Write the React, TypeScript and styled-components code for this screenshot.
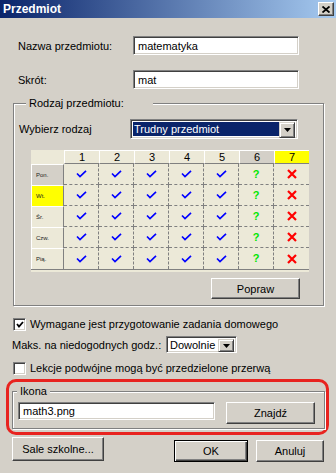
import styled, { createGlobalStyle } from "styled-components";

const GlobalStyle = createGlobalStyle`
  html, body {
    margin: 0;
    padding: 0;
    background: #d4d0c8;
  }
  * {
    box-sizing: border-box;
  }
`;

type Tone = "plain" | "grey" | "yellow";

const toneColor: Record<Tone, string> = {
  plain: "#ece9d8",
  grey: "#d4d0c8",
  yellow: "#ffff00",
};

const days: { label: string; tone: Tone }[] = [
  { label: "Pon.", tone: "grey" },
  { label: "Wt.", tone: "yellow" },
  { label: "Śr.", tone: "plain" },
  { label: "Czw.", tone: "plain" },
  { label: "Pią.", tone: "plain" },
];

const hours: { label: string; tone: Tone; mark: "yes" | "maybe" | "no" }[] = [
  { label: "1", tone: "plain", mark: "yes" },
  { label: "2", tone: "plain", mark: "yes" },
  { label: "3", tone: "plain", mark: "yes" },
  { label: "4", tone: "plain", mark: "yes" },
  { label: "5", tone: "plain", mark: "yes" },
  { label: "6", tone: "grey", mark: "maybe" },
  { label: "7", tone: "yellow", mark: "no" },
];

const CheckMark = () => (
  <svg width="11" height="8" viewBox="0 0 11 8">
    <polyline points="1,3.5 4,6.5 10,0.8" fill="none" stroke="#0000ff" strokeWidth="1.7" />
  </svg>
);

const CrossMark = () => (
  <svg width="10" height="10" viewBox="0 0 10 10">
    <path d="M1 1 L9 9 M9 1 L1 9" stroke="#ff0000" strokeWidth="2.2" />
  </svg>
);

const DropArrow = () => (
  <svg width="7" height="4" viewBox="0 0 7 4">
    <polygon points="0,0 7,0 3.5,4" fill="#000" />
  </svg>
);

const App = () => {
  return (
    <>
      <GlobalStyle />
      <Window>
        <TitleBar>
          <Title>Przedmiot</Title>
          <CloseButton>
            <svg width="8" height="7" viewBox="0 0 8 7">
              <path d="M0.5 0.5 L7.5 6.5 M7.5 0.5 L0.5 6.5" stroke="#000" strokeWidth="1.8" />
            </svg>
          </CloseButton>
        </TitleBar>

        <FieldRow $top={18} $left={18}>
          <Label $width={115}>Nazwa przedmiotu:</Label>
          <TextBox $width={166} $height={19}>matematyka</TextBox>
        </FieldRow>
        <FieldRow $top={15} $left={18}>
          <Label $width={115}>Skrót:</Label>
          <TextBox $width={166} $height={19}>mat</TextBox>
        </FieldRow>

        <GroupBox $top={7} $left={13} $width={311} $pad="9px 5px 6px 5px">
          <Legend $shift={7} $width={127}>Rodzaj przedmiotu:</Legend>
          <FieldRow $top={0} $left={0}>
            <Label $width={111}>Wybierz rodzaj</Label>
            <Combo $width={168} $height={20}>
              <ComboText $selected>Trudny przedmiot</ComboText>
              <ComboButton $height={16}>
                <DropArrow />
              </ComboButton>
            </Combo>
          </FieldRow>

          <Grid>
            <Corner />
            {hours.map((h) => (
              <HeadCell key={h.label} $tone={h.tone}>
                {h.label}
              </HeadCell>
            ))}
            {days.map((d, row) => (
              <>
                <DayCell key={d.label} $tone={d.tone}>
                  {d.label}
                </DayCell>
                {hours.map((h, col) => (
                  <MarkCell
                    key={d.label + h.label}
                    $lastCol={col === hours.length - 1}
                    $lastRow={row === days.length - 1}
                  >
                    {h.mark === "yes" && <CheckMark />}
                    {h.mark === "maybe" && <Maybe>?</Maybe>}
                    {h.mark === "no" && <CrossMark />}
                  </MarkCell>
                ))}
              </>
            ))}
          </Grid>

          <Button $width={89} $height={21} $top={8} $align="flex-end" $right={18}>
            Popraw
          </Button>
        </GroupBox>

        <CheckRow $top={11}>
          <CheckBox>
            <svg width="8" height="7" viewBox="0 0 8 7">
              <polyline points="1,3 3,5.5 7,1" fill="none" stroke="#000" strokeWidth="1.8" />
            </svg>
          </CheckBox>
          Wymagane jest przygotowanie zadania domowego
        </CheckRow>

        <FieldRow $top={5} $left={12}>
          <Label $width={154}>Maks. na niedogodnych godz.:</Label>
          <Combo $width={71} $height={17}>
            <ComboText>Dowolnie</ComboText>
            <ComboButton $height={13}>
              <DropArrow />
            </ComboButton>
          </Combo>
        </FieldRow>

        <CheckRow $top={8}>
          <CheckBox />
          Lekcje podwójne mogą być przedzielone przerwą
        </CheckRow>

        <Highlight>
          <GroupBox $top={0} $left={0} $width={313} $pad="2px 5px 4px 5px">
            <Legend $shift={-1}>Ikona</Legend>
            <IconRow>
              <TextBox $width={197} $height={18}>math3.png</TextBox>
              <Button $width={89} $height={22}>
                Znajdź
              </Button>
            </IconRow>
          </GroupBox>
        </Highlight>

        <ButtonBar>
          <Button $width={92} $height={24}>
            Sale szkolne...
          </Button>
          <Button $width={74} $height={22} $top={3} $left={70} $default>
            OK
          </Button>
          <Button $width={68} $height={22} $top={3} $left={8}>
            Anuluj
          </Button>
        </ButtonBar>
      </Window>
    </>
  );
};

const Window = styled.div`
  width: 336px;
  height: 473px;
  background: #d4d0c8;
  display: flex;
  flex-direction: column;
  overflow: hidden;
  font-family: "Liberation Sans", Arial, sans-serif;
  font-size: 11px;
  color: #000;
`;

const TitleBar = styled.div`
  height: 18px;
  display: flex;
  align-items: center;
  justify-content: space-between;
  padding: 0 2px 0 3px;
  background: linear-gradient(to right, #0a246a, #a6caf0);
`;

const Title = styled.span`
  color: #fff;
  font-weight: bold;
  font-size: 12px;
`;

const CloseButton = styled.div`
  width: 16px;
  height: 14px;
  display: flex;
  align-items: center;
  justify-content: center;
  background: #d4d0c8;
  border: 1px solid;
  border-color: #fff #404040 #404040 #fff;
  box-shadow: inset -1px -1px 0 #808080;
`;

const FieldRow = styled.div<{ $top: number; $left: number }>`
  display: flex;
  align-items: center;
  margin-top: ${(p) => p.$top}px;
  padding-left: ${(p) => p.$left}px;
`;

const Label = styled.span<{ $width: number }>`
  width: ${(p) => p.$width}px;
  flex-shrink: 0;
  white-space: nowrap;
`;

const sunken = `
  border: 1px solid;
  border-color: #808080 #fff #fff #808080;
  box-shadow: inset 1px 1px 0 #404040, inset -1px -1px 0 #d4d0c8;
`;

const TextBox = styled.div<{ $width: number; $height: number }>`
  ${sunken}
  width: ${(p) => p.$width}px;
  height: ${(p) => p.$height}px;
  background: #fff;
  display: flex;
  align-items: center;
  padding-left: 4px;
`;

const GroupBox = styled.fieldset<{ $top: number; $left: number; $width: number; $pad: string }>`
  margin: ${(p) => p.$top}px 0 0 ${(p) => p.$left}px;
  width: ${(p) => p.$width}px;
  padding: ${(p) => p.$pad};
  border: 1px solid #808080;
  box-shadow: 1px 1px 0 #fff, inset 1px 1px 0 #fff;
  display: flex;
  flex-direction: column;
  min-inline-size: 0;
`;

const Legend = styled.legend<{ $shift: number; $width?: number }>`
  margin-left: ${(p) => p.$shift}px;
  padding: 0 3px;
  line-height: 14px;
  font-size: 11px;
  background: #d4d0c8;
  ${(p) => (p.$width ? `width: ${p.$width}px;` : "")}
`;

const Combo = styled.div<{ $width: number; $height: number }>`
  ${sunken}
  width: ${(p) => p.$width}px;
  height: ${(p) => p.$height}px;
  background: #fff;
  display: flex;
  padding: 2px;
`;

const ComboText = styled.div<{ $selected?: boolean }>`
  flex: 1;
  display: flex;
  align-items: center;
  padding-left: 1px;
  white-space: nowrap;
  overflow: hidden;
  background: ${(p) => (p.$selected ? "#0a246a" : "#fff")};
  color: ${(p) => (p.$selected ? "#fff" : "#000")};
`;

const ComboButton = styled.div<{ $height: number }>`
  width: 16px;
  height: ${(p) => p.$height}px;
  flex-shrink: 0;
  display: flex;
  align-items: center;
  justify-content: center;
  background: #d4d0c8;
  border: 1px solid;
  border-color: #d4d0c8 #404040 #404040 #d4d0c8;
  box-shadow: inset 1px 1px 0 #fff, inset -1px -1px 0 #808080;
`;

const Grid = styled.div`
  display: grid;
  grid-template-columns: 33px repeat(7, 35px);
  grid-template-rows: 14px repeat(5, 21px);
  width: 278px;
  margin: 11px 0 0 12px;
  border-bottom: 1px solid #808080;
  box-shadow: 0 2px 0 #ece9d8;
`;

const Corner = styled.div`
  background: #ece9d8;
`;

const HeadCell = styled.div<{ $tone: Tone }>`
  background: ${(p) => toneColor[p.$tone]};
  border-top: 1px solid #fff;
  border-left: 1px solid #fff;
  border-bottom: 1px solid #808080;
  display: flex;
  align-items: center;
  justify-content: center;
  font-size: 11px;
  line-height: 12px;
`;

const DayCell = styled.div<{ $tone: Tone }>`
  background: ${(p) => toneColor[p.$tone]};
  border-top: 1px solid #fff;
  border-left: 1px solid #fff;
  border-right: 1px solid #808080;
  display: flex;
  align-items: center;
  padding-left: 4px;
  font-size: 6px;
  color: #222;
`;

const MarkCell = styled.div<{ $lastCol: boolean; $lastRow: boolean }>`
  background: #ece9d8;
  border-right: ${(p) => (p.$lastCol ? "none" : "1px dashed #808080")};
  border-bottom: ${(p) => (p.$lastRow ? "none" : "1px dashed #808080")};
  display: flex;
  align-items: center;
  justify-content: center;
`;

const Maybe = styled.span`
  color: #00e600;
  font-weight: bold;
  font-size: 11px;
  line-height: 11px;
`;

const Button = styled.div<{
  $width: number;
  $height: number;
  $top?: number;
  $left?: number;
  $right?: number;
  $align?: string;
  $default?: boolean;
}>`
  width: ${(p) => p.$width}px;
  height: ${(p) => p.$height}px;
  margin-top: ${(p) => p.$top ?? 0}px;
  margin-left: ${(p) => p.$left ?? 0}px;
  margin-right: ${(p) => p.$right ?? 0}px;
  align-self: ${(p) => p.$align ?? "auto"};
  flex-shrink: 0;
  display: flex;
  align-items: center;
  justify-content: center;
  background: #d4d0c8;
  border: 1px solid;
  border-color: ${(p) => (p.$default ? "#000" : "#fff #404040 #404040 #fff")};
  box-shadow: ${(p) =>
    p.$default
      ? "inset 1px 1px 0 #fff, inset -1px -1px 0 #404040, inset -2px -2px 0 #808080"
      : "inset -1px -1px 0 #808080, inset 1px 1px 0 #d4d0c8"};
`;

const CheckRow = styled.div<{ $top: number }>`
  display: flex;
  align-items: center;
  gap: 4px;
  height: 14px;
  margin-top: ${(p) => p.$top}px;
  padding-left: 13px;
  white-space: nowrap;
`;

const CheckBox = styled.span`
  ${sunken}
  width: 13px;
  height: 13px;
  flex-shrink: 0;
  background: #fff;
  display: flex;
  align-items: center;
  justify-content: center;
`;

const Highlight = styled.div`
  margin: 4px 0 0 6px;
  width: 323px;
  padding: 2px 1px 3px 3px;
  border: 3px solid #e8231f;
  border-radius: 10px;
`;

const IconRow = styled.div`
  display: flex;
  align-items: flex-start;
  gap: 11px;
  margin-top: 2px;
`;

const ButtonBar = styled.div`
  display: flex;
  align-items: flex-start;
  margin-top: 2px;
  padding-left: 12px;
`;

export default App;
